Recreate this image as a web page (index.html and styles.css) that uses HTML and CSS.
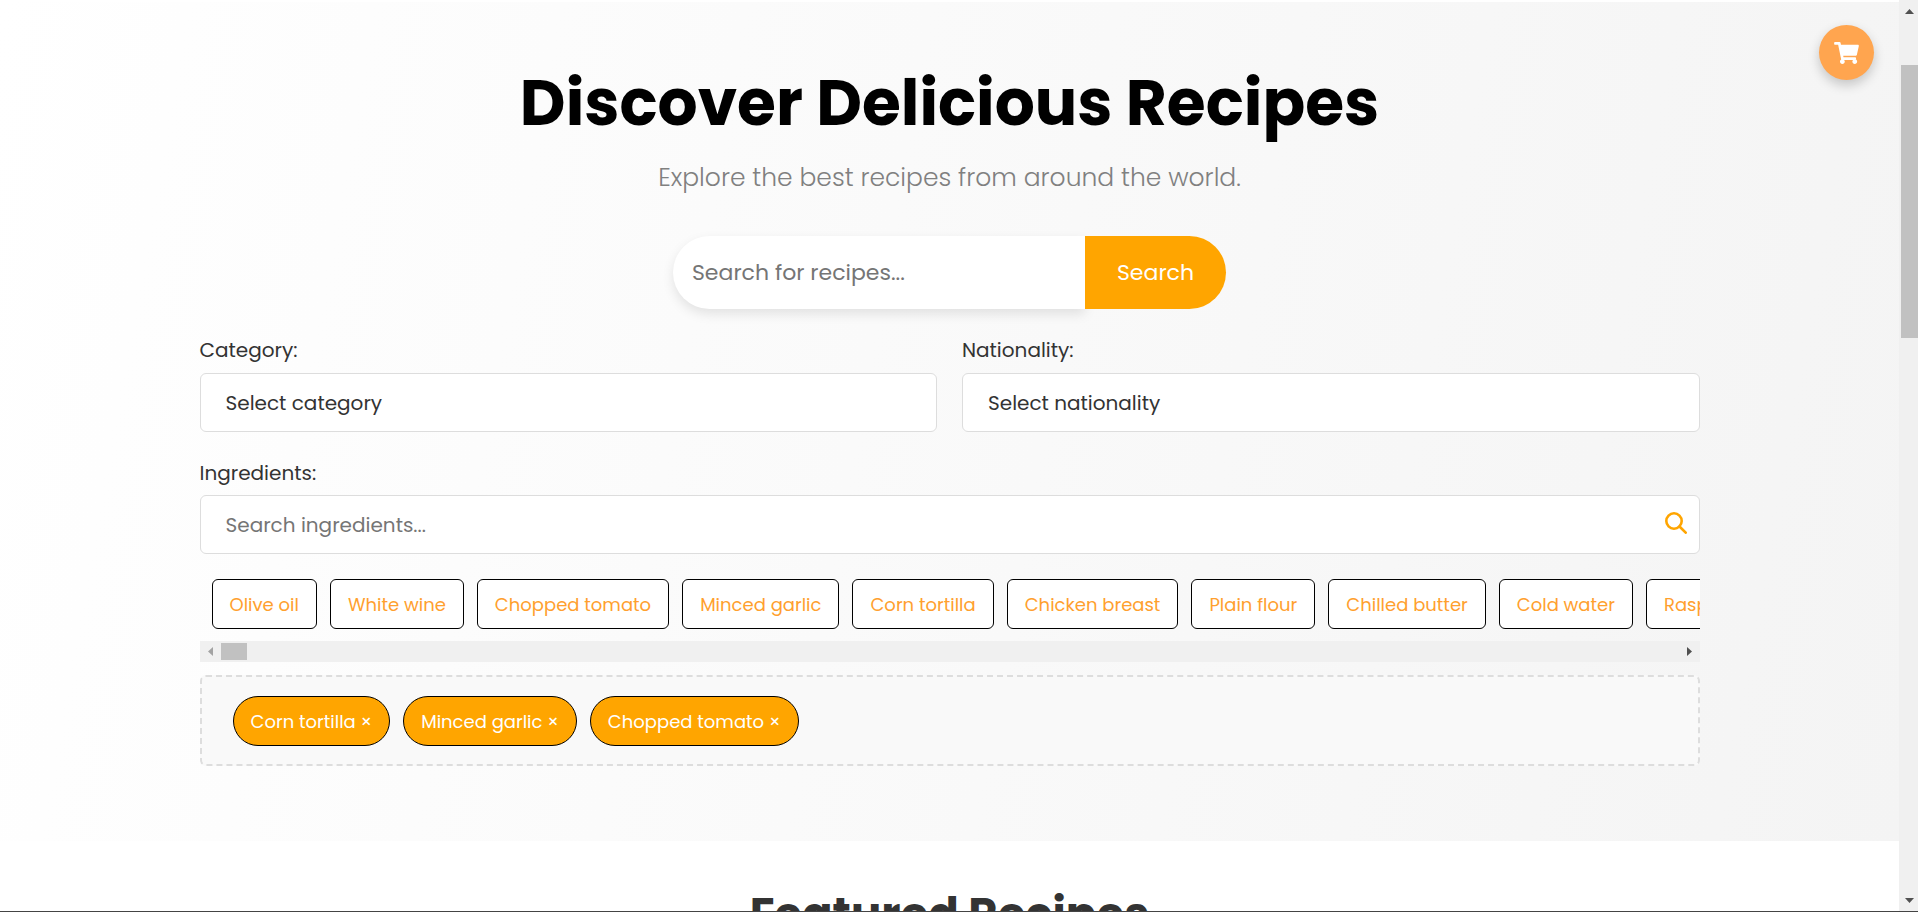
FILE: index.html
```html
<!DOCTYPE html>
<html lang="en">
<head>
<meta charset="utf-8">
<meta name="viewport" content="width=device-width, initial-scale=1">
<title>Discover Delicious Recipes</title>
<link rel="stylesheet" href="styles.css">
</head>
<body>
<div class="viewport">
  <main class="page">
    <section class="hero">
      <div class="container">
        <h1 class="hero-title">Discover Delicious Recipes</h1>
        <p class="hero-subtitle">Explore the best recipes from around the world.</p>
        <form class="search">
          <input class="search-input" type="text" placeholder="Search for recipes..." aria-label="Search for recipes">
          <button class="search-button" type="button">Search</button>
        </form>
        <div class="filters">
          <div class="field">
            <label class="label" for="category">Category:</label>
            <select class="control" id="category"><option>Select category</option></select>
          </div>
          <div class="field">
            <label class="label" for="nationality">Nationality:</label>
            <select class="control" id="nationality"><option>Select nationality</option></select>
          </div>
        </div>
        <div class="field ingredients">
          <label class="label" for="ingredients">Ingredients:</label>
          <div class="control-wrap">
            <input class="control" id="ingredients" type="text" placeholder="Search ingredients...">
            <svg class="control-icon" viewBox="0 0 22 22" aria-hidden="true"><circle cx="9" cy="9" r="7.7"/><path d="M14.5 14.5L20.7 20.7"/></svg>
          </div>
        </div>
        <div class="chips">
          <button class="chip" type="button">Olive oil</button>
          <button class="chip" type="button">White wine</button>
          <button class="chip" type="button">Chopped tomato</button>
          <button class="chip" type="button">Minced garlic</button>
          <button class="chip" type="button">Corn tortilla</button>
          <button class="chip" type="button">Chicken breast</button>
          <button class="chip" type="button">Plain flour</button>
          <button class="chip" type="button">Chilled butter</button>
          <button class="chip" type="button">Cold water</button>
          <button class="chip" type="button">Raspberry jam</button>
        </div>
        <div class="hscroll" aria-hidden="true">
          <svg class="harrow harrow-off" viewBox="0 0 5 9"><path d="M5 0v9L0 4.500z"/></svg>
          <div class="hthumb"></div>
          <svg class="harrow harrow-end" viewBox="0 0 5 9"><path d="M0 0v9l5-4.500z"/></svg>
        </div>
        <div class="selected">
          <button class="chip chip-on" type="button">Corn tortilla ×</button>
          <button class="chip chip-on" type="button">Minced garlic ×</button>
          <button class="chip chip-on" type="button">Chopped tomato ×</button>
        </div>
      </div>
    </section>
    <section class="featured">
      <h2 class="featured-title">Featured Recipes</h2>
    </section>
    <button class="cart" type="button" aria-label="Cart">
      <svg class="cart-icon" viewBox="0 0 576 512" aria-hidden="true"><path d="M528.120 301.319l47.273-208C578.806 78.301 567.391 64 551.990 64H159.208l-9.166-44.810C147.758 8.021 137.930 0 126.529 0H24C10.745 0 0 10.745 0 24v16c0 13.255 10.745 24 24 24h69.883l70.248 343.435C147.325 417.100 136 435.222 136 456c0 30.928 25.072 56 56 56s56-25.072 56-56c0-15.674-6.447-29.835-16.824-40h209.647C430.447 426.165 424 440.326 424 456c0 30.928 25.072 56 56 56s56-25.072 56-56c0-22.172-12.888-41.332-31.579-50.405l5.517-24.276c3.413-15.018-8.002-29.319-23.403-29.319H218.117l-6.545-32h293.145c11.206 0 20.920-7.754 23.403-18.681z"/></svg>
    </button>
  </main>
  <div class="vscroll" aria-hidden="true">
    <svg class="varrow" viewBox="0 0 9 5"><path d="M0 5h9L4.500 0z"/></svg>
    <div class="vthumb"></div>
    <svg class="varrow varrow-end" viewBox="0 0 9 5"><path d="M0 0h9L4.500 5z"/></svg>
  </div>
</div>
</body>
</html>
```
FILE: styles.css
```css
* { box-sizing: border-box; }

body {
  margin: 0;
  font-family: Poppins, Inter, "Open Sans", sans-serif;
  font-size: 20px;
  color: #333;
  background: #fff;
}

button, input, select { font: inherit; margin: 0; }

.viewport {
  display: flex;
  height: 100vh;
  overflow: hidden;
  border-bottom: 1px solid #444;
}

.page {
  position: relative;
  flex: 1;
  min-width: 0;
  overflow: hidden;
}

.hero {
  margin-top: 2px;
  padding: 62px 24px 75px;
  background: linear-gradient(100deg, #fff, #f4f4f4);
}

.container { max-width: 1500px; margin: 0 auto; }

.hero-title {
  margin: 0 0 18px;
  font-size: 63px;
  line-height: 78px;
  font-weight: 700;
  text-align: center;
  color: #000;
}

.hero-subtitle {
  margin: 0 0 40px;
  font-size: 25px;
  line-height: 36px;
  font-weight: 300;
  text-align: center;
  color: #808080;
}

.search {
  display: flex;
  justify-content: center;
  height: 73px;
  margin-bottom: 26px;
  font-size: 22px;
}

.search-input {
  width: 412px;
  padding: 0 19px;
  border: 0;
  border-radius: 37px 0 0 37px;
  background: #fff;
  box-shadow: 0 5px 12px rgba(0, 0, 0, 0.1);
}

.search-button {
  position: relative;
  padding: 0 32px;
  border: 0;
  border-radius: 0 37px 37px 0;
  background: #ffa500;
  color: #fff;
}

::placeholder { color: #757575; opacity: 1; }

.filters {
  display: grid;
  grid-template-columns: 1fr 1fr;
  gap: 25px;
  margin-bottom: 26px;
}

.label {
  display: block;
  margin-bottom: 8px;
  line-height: 30px;
}

.ingredients .label { margin-bottom: 7px; }

.control {
  display: block;
  width: 100%;
  height: 59px;
  padding: 0 25px;
  border: 1px solid #ddd;
  border-radius: 6px;
  background: #fff;
  color: #333;
  appearance: none;
}

.control-wrap { position: relative; }

.control-icon {
  position: absolute;
  top: 17px;
  right: 13px;
  width: 22px;
  height: 22px;
  fill: none;
  stroke: #ffa500;
  stroke-width: 2.6;
  stroke-linecap: round;
}

.chips {
  display: flex;
  gap: 13px;
  padding: 25px 12px 12px;
  overflow: hidden;
}

.chip {
  flex: none;
  height: 50px;
  padding: 0 17px;
  border: 1px solid #000;
  border-radius: 6px;
  background: #fff;
  color: #ffa02e;
  font-size: 18px;
  white-space: nowrap;
}

.chip-on {
  border-radius: 25px;
  background: #ffa500;
  color: #fff;
}

.hscroll {
  display: flex;
  align-items: center;
  gap: 8px;
  height: 21px;
  margin-bottom: 13px;
  padding: 0 8px;
  background: #f0f0f0;
}

.harrow { width: 5px; height: 9px; fill: #505050; }
.harrow-off { fill: #a3a3a3; }
.harrow-end { margin-left: auto; }

.hthumb { width: 26px; height: 17px; background: #c1c1c1; }

.selected {
  display: flex;
  flex-wrap: wrap;
  gap: 13px;
  padding: 19px 31px 18px;
  border: 2px dashed #ddd;
  border-radius: 6px;
  background: #f9f9f9;
}

.featured { padding: 50px 24px; }

.featured-title {
  margin: 0;
  font-size: 45px;
  line-height: 48px;
  font-weight: 700;
  text-align: center;
}

.cart {
  position: absolute;
  top: 25px;
  right: 25px;
  display: grid;
  place-items: center;
  width: 55px;
  height: 55px;
  padding: 0;
  border: 0;
  border-radius: 50%;
  background: #ffa54f;
  box-shadow: 0 5px 12px rgba(0, 0, 0, 0.2);
}

.cart-icon { width: 25px; height: 22px; fill: #fff; }

.vscroll {
  display: flex;
  flex-direction: column;
  align-items: center;
  width: 19px;
  padding: 9px 0 8px 2px;
  background: #f0f0f0;
}

.vthumb {
  width: 100%;
  height: 273px;
  margin-top: 51px;
  background: #c1c1c1;
}

.varrow { width: 9px; height: 5px; fill: #505050; }
.varrow-end { margin-top: auto; }
```
